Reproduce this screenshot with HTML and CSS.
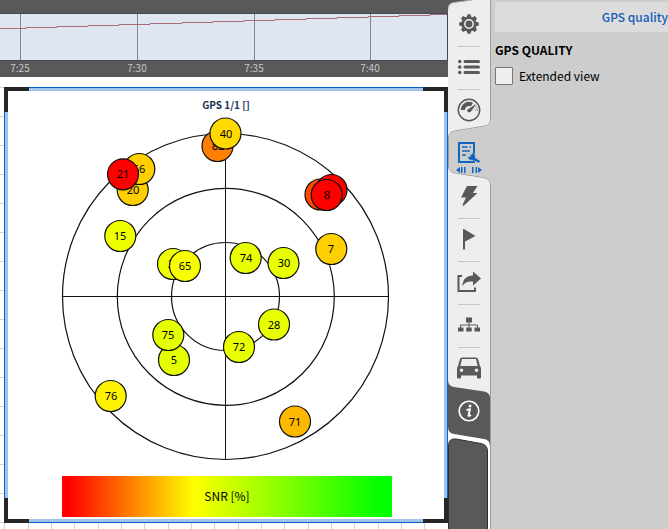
FILE: index.html
```html
<!DOCTYPE html>
<html lang="en">
<head>
<meta charset="utf-8">
<title>GPS quality</title>
<link rel="stylesheet" href="styles.css">
</head>
<body>
<div class="app">
  <main class="workspace">
    <section class="timeline">
      <svg class="timeline-chart" viewBox="0 0 448 63" role="img" aria-label="Timeline">
        <rect class="plot" x="-2" y="-0.5" width="449.5" height="47"/>
        <path class="tick" d="M20.500 0V46M137.500 0V46M254.500 0V46M370.500 0V46"/>
        <path class="trace" d="M0 14.500H26V13.500H57V12.500H88V11.500H119V10.500H150V9.500H182V8.500H213V7.500H244V6.500H275V5.500H306V4.500H337V3.500H368V2.500H399V1.500H430V0.500H447"/>
        <g class="time">
          <text x="20" y="58">7:25</text>
          <text x="137" y="58">7:30</text>
          <text x="254" y="58">7:35</text>
          <text x="370" y="58">7:40</text>
        </g>
      </svg>
    </section>
    <section class="canvas">
      <article class="widget">
        <i class="corner top left"></i><i class="corner top right"></i>
        <i class="corner bottom left"></i><i class="corner bottom right"></i>
        <h2 class="widget-title">GPS 1/1 []</h2>
        <svg class="sky" viewBox="8 115 436 361" role="img" aria-label="Satellite positions">
          <g class="rings">
            <circle cx="225.500" cy="296.500" r="163"/>
            <circle cx="225.800" cy="296.800" r="108.500"/>
            <circle cx="225.500" cy="296.500" r="54"/>
            <path d="M62.500 296.500H388.500M225.500 133.500V459.500"/>
          </g>
          <g class="sats">
            <circle cx="217.500" cy="146" r="15.500" fill="#ff7f00"/><text x="218" y="150">82</text>
            <circle cx="225.500" cy="133.500" r="15.500" fill="#ffd900"/><text x="226" y="138">40</text>
            <circle cx="132.700" cy="190" r="15.500" fill="#ffcf00"/><text x="133" y="194">20</text>
            <circle cx="139.300" cy="169" r="15.500" fill="#ffcf00"/><text x="139" y="173">66</text>
            <circle cx="123" cy="174.300" r="15.500" fill="#ff0000"/><text x="123" y="178">21</text>
            <circle cx="120.300" cy="236" r="15.500" fill="#f0ff00"/><text x="120" y="240">15</text>
            <circle cx="173" cy="264" r="15.500" fill="#f0ff00"/><text x="174" y="268">29</text>
            <circle cx="185" cy="266" r="15.500" fill="#f8ff00"/><text x="185" y="270">65</text>
            <circle cx="320.500" cy="194.500" r="15.500" fill="#ff4800"/>
            <circle cx="331.500" cy="190" r="15.500" fill="#ff0000"/>
            <circle cx="326.700" cy="195" r="15.500" fill="#ff0000"/><text x="327" y="199">8</text>
            <circle cx="331.300" cy="249" r="15.500" fill="#ffd000"/><text x="331" y="253">7</text>
            <circle cx="245.700" cy="258" r="15.500" fill="#e8ff00"/><text x="246" y="262">74</text>
            <circle cx="283.500" cy="263" r="15.500" fill="#e8ff00"/><text x="284" y="267">30</text>
            <circle cx="274" cy="324.500" r="15.500" fill="#e8ff00"/><text x="274" y="329">28</text>
            <circle cx="239" cy="347" r="15.500" fill="#e8ff00"/><text x="239" y="351">72</text>
            <circle cx="174" cy="360" r="15.500" fill="#e4ff00"/><text x="174" y="364">5</text>
            <circle cx="168.300" cy="335" r="15.500" fill="#e4ff00"/><text x="168" y="339">75</text>
            <circle cx="110.700" cy="396" r="15.500" fill="#fff200"/><text x="111" y="400">76</text>
            <circle cx="295" cy="421.500" r="15.500" fill="#ffb800"/><text x="295" y="426">71</text>
          </g>
        </svg>
        <div class="legend">SNR [%]</div>
      </article>
    </section>
  </main>

  <nav class="tabs" aria-label="Tools">
    <svg class="tabs-shape" viewBox="0 0 43 529" aria-hidden="true">
      <rect width="43" height="529" fill="#eee"/>
      <path d="M0 0H24L6 2.500Q0 3.500 0 9Z" fill="#595959"/>
      <path d="M0 9Q0 3.500 6 2.500L24 0" fill="none" stroke="#aaa"/>
      <path d="M42.500 0V119Q42.500 125 37 126L7 131Q.5 132 .5 138V166Q.5 172 7 173L36 177.500Q42.500 179 42.500 185V529" fill="none" stroke="#9c9c9c"/>
      <path d="M43 119Q42.500 125 37 126.500L7 131.500Q1 132.500 1 138V166Q1 171.500 7 172.500L36 177Q43 178.500 43 185Z" fill="#cdcdcd"/>
      <path d="M0 380Q0 386 6 387L36 391.500Q42 392.500 42 398V529H0Z" fill="#595959"/>
      <path d="M0 427Q0 433 6 434L36 439Q42 440 42 446V529H0Z" fill="#fff"/>
      <path d="M.5 529V446Q.5 438 8 439L33 443.500Q39.500 445 39.500 451V529" fill="#595959" stroke="#303030"/>
    </svg>
    <button class="tab" aria-label="Settings"><svg viewBox="0 0 24 24"><g fill="#595959"><circle cx="12" cy="12" r="7.500"/><path d="M10.500 2.200h3l1.200 4H9.300zM10.500 21.800h3l1.200-4H9.300zM2.200 10.500v3l4 1.200V9.300zM21.800 10.500v3l-4 1.200V9.300z"/><path d="M10.500 2.200h3l1.200 4H9.300zM10.500 21.800h3l1.200-4H9.300zM2.200 10.500v3l4 1.200V9.300zM21.800 10.500v3l-4 1.200V9.300z" transform="rotate(45 12 12)"/></g><circle cx="12" cy="12" r="4.200" fill="none" stroke="#eee" stroke-width="1.500"/></svg></button>
    <button class="tab ruled" aria-label="List"><svg viewBox="0 0 24 24"><path d="M8 6.500H21.500M8 12H21.500M8 17.500H21.500" stroke="#595959" stroke-width="3" stroke-linecap="round"/><path d="M2.700 6.500h.1M2.700 12h.1M2.700 17.500h.1" stroke="#595959" stroke-width="3.500" stroke-linecap="round"/></svg></button>
    <button class="tab ruled" aria-label="Gauge"><svg viewBox="0 0 24 24"><circle cx="12" cy="12" r="10.700" fill="none" stroke="#595959" stroke-width="1.500"/><path d="M3.800 12A8.200 8.200 0 0 1 16 4.800L14 8.300A4.500 4.500 0 0 0 7.800 12Z" fill="#595959"/><path d="M17.500 6.200A8.200 8.200 0 0 1 20.200 12H16.500" fill="none" stroke="#aaa" stroke-width="2" stroke-dasharray="1 1"/><path d="M11.500 11.500L18 7.200 13.500 13.500Z" fill="#595959" stroke="#595959"/><circle cx="12" cy="12.600" r="1.800" fill="#595959"/></svg></button>
    <button class="tab current" aria-label="Widget properties"><svg viewBox="0 -8 28 40" fill="#1264c0"><path d="M4 2H19V21H4Z" fill="none" stroke="#1264c0" stroke-width="2"/><path d="M7 6h5.500M14.500 6H16M7 10H15M7 14h4" fill="none" stroke="#1264c0" stroke-width="1.500"/><path d="M12.500 12l2.500 2 1.500-.5.500-2 3 2 .5 3.500 5 3-1.500 2-5.500-2.500-4-.5-2.500-3.500 2.500.5 1-1z" stroke="#cdcdcd" stroke-width=".5"/><path d="M5 26v6l-4-3zM6 26h1.500v6H6zM9 26h1.500v6H9zM23 26v6l4-3zM20.500 26H22v6h-1.500zM17 26h1.500v6H17z"/></svg></button>
    <button class="tab" aria-label="Events"><svg viewBox="0 0 24 24"><path d="M10 2H20.500L16 9H20.500L6.500 22 5.500 21 9 13.500H4Z" fill="#595959"/></svg></button>
    <button class="tab ruled" aria-label="Flag"><svg viewBox="0 0 24 24"><path d="M6 2H7L18.500 9 8 14.500V22.500H6Z" fill="#595959"/></svg></button>
    <button class="tab ruled" aria-label="Share"><svg viewBox="0 0 24 24"><path d="M5 6H1.500V21H18V17.500" fill="none" stroke="#595959" stroke-width="2"/><path d="M5.500 16C5.500 9 10 5.500 16 5.500V1.500L24 8.500 16 15.500V11.500C11 11 8 12 5.500 16Z" fill="#595959"/></svg></button>
    <button class="tab ruled" aria-label="Structure"><svg viewBox="0 0 24 24"><path d="M9 4.500h6v5H9zM1 14.500h5.500v4H1zM9.200 14.500h5.500v4H9.200zM17.500 14.500H23v4h-5.500z" fill="#595959"/><path d="M12 9V15M3.500 15V12H20.500V15" fill="none" stroke="#595959"/></svg></button>
    <button class="tab ruled" aria-label="Vehicle"><svg viewBox="0 0 24 24"><path fill-rule="evenodd" d="M5 1.500H19Q20.500 1.500 21 3L23 10Q24 11 24 13V21.500Q24 22.500 23 22.500H21Q20 22.500 20 21.500V19.500H4V21.500Q4 22.500 3 22.500H1Q0 22.500 0 21.500V13Q0 11 1 10L3 3Q3.500 1.500 5 1.500ZM5 3L3.300 10H20.700L19 3ZM4.500 12.500A1.800 1.800 0 1 0 4.500 16.100 1.800 1.800 0 1 0 4.500 12.500ZM19.500 12.500A1.800 1.800 0 1 0 19.500 16.100 1.800 1.800 0 1 0 19.500 12.500Z" fill="#595959"/></svg></button>
    <button class="tab" aria-label="Information"><svg viewBox="0 0 24 24"><circle cx="12" cy="12" r="9.800" fill="none" stroke="#fff" stroke-width="1.600"/><circle cx="13" cy="7" r="1.500" fill="#fff"/><path d="M9.500 11.200Q12.500 10 13 10.200L11.500 16.500Q11.500 17.500 14 16" fill="none" stroke="#fff" stroke-width="1.900"/></svg></button>
  </nav>

  <aside class="panel">
    <header class="panel-header">GPS quality</header>
    <h1 class="panel-title">GPS QUALITY</h1>
    <label class="option" for="extended"><input id="extended" type="checkbox">Extended view</label>
  </aside>
</div>
</body>
</html>
```

FILE: styles.css
```css
* {
  box-sizing: border-box;
}

body {
  margin: 0;
  background: #cdcdcd;
  font: 12px/18px "Noto Sans CJK SC", "Noto Sans", sans-serif;
  color: #000;
}

.app {
  display: grid;
  grid-template-columns: minmax(0, 1fr) 43px 177px;
  min-height: 100vh;
  overflow: hidden;
}

.workspace {
  display: flex;
  flex-direction: column;
  background: #fff;
}

/* Timeline strip */
.timeline {
  padding-top: 14px;
  background: #595959;
}

.timeline-chart {
  display: block;
  width: 100%;
  overflow: visible;
}

.plot {
  fill: #dfe6f2;
  stroke: #404a56;
}

.tick {
  stroke: #7c8696;
}

.trace {
  fill: none;
  stroke: #a86c78;
}

.time {
  fill: #c8c8c8;
  font-size: 10px;
  text-anchor: middle;
}

/* Canvas with its grid; the strip above the first row stays plain */
.canvas {
  flex: 1;
  padding: 10px 0 6px 4px;
  background-color: #fff;
  background-image:
    linear-gradient(#fff, #fff),
    linear-gradient(90deg, #d3d3d3 1px, transparent 1px),
    linear-gradient(90deg, #d3d3d3 1px, transparent 1px),
    linear-gradient(90deg, #d3d3d3 1px, transparent 1px),
    linear-gradient(#d3d3d3 1px, transparent 1px);
  background-size: 100% 10px, 70px 100%, 70px 100%, 70px 100%, 100% 29px;
  background-position: 0 0, 4px 0, 28px 0, 51px 0, 0 10px;
  background-repeat: no-repeat, repeat, repeat, repeat, repeat;
}

.widget {
  position: relative;
  padding: 3px 3px 5px;
  border: 1px solid #0a64c8;
  box-shadow: inset 0 0 0 3px #a0c4e8;
  background: #fff;
}

.corner {
  position: absolute;
  width: 25px;
  height: 25px;
  border: 0 solid #262626;
}

.top { top: -1px; border-top-width: 4px; }
.bottom { bottom: -1px; border-bottom-width: 4px; }
.left { left: -1px; border-left-width: 4px; }
.right { right: -1px; border-right-width: 4px; }

.widget-title {
  margin: 0;
  padding-top: 4px;
  font-size: 10px;
  line-height: 20px;
  text-align: center;
  color: #1c3354;
}

.sky {
  display: block;
  width: 100%;
}

.rings {
  fill: none;
  stroke: #111;
  stroke-width: 1.2px;
}

.rings path {
  stroke-width: 1px;
}

.sats circle {
  stroke: #111;
  stroke-width: 1.2px;
}

.sats text {
  font: 11px "Noto Sans", sans-serif;
  text-anchor: middle;
}

.legend {
  margin: 0 52px 0 54px;
  padding-bottom: 2px;
  line-height: 39px;
  text-align: center;
  background: linear-gradient(90deg, #f00 2%, #ff0 40%, #0f0 97%);
}

/* Tool tabs */
.tabs {
  position: relative;
  display: flex;
  flex-direction: column;
  padding-top: 2px;
  overflow: hidden;
  background: #fff;
}

.tabs-shape {
  position: absolute;
  top: 0;
  left: 0;
  width: 100%;
}

.tab {
  position: relative;
  display: flex;
  align-items: center;
  justify-content: center;
  height: 43px;
  padding: 0 1px 0 0;
  border: 0;
  background: none;
}

.tab svg {
  width: 24px;
  height: 24px;
}

.current svg {
  width: 28px;
  height: 40px;
}

.ruled::before {
  content: "";
  position: absolute;
  top: 1px;
  left: 10px;
  width: 22px;
  height: 1px;
  background: #c6c6c6;
}

/* Settings panel */
.panel {
  padding: 2px 0 0 4px;
}

.panel-header {
  line-height: 30px;
  text-align: right;
  font-weight: 500;
  background: #dcdcdc;
  color: #1260b8;
}

.panel-title {
  margin: 9px 0 8px;
  font-size: 12px;
  line-height: 18px;
}

.option {
  display: flex;
  align-items: center;
  gap: 6px;
}

.option input {
  appearance: none;
  width: 18px;
  height: 18px;
  margin: 0;
  border: 1px solid #777;
  border-radius: 1px;
  background: #efefef;
}
```
